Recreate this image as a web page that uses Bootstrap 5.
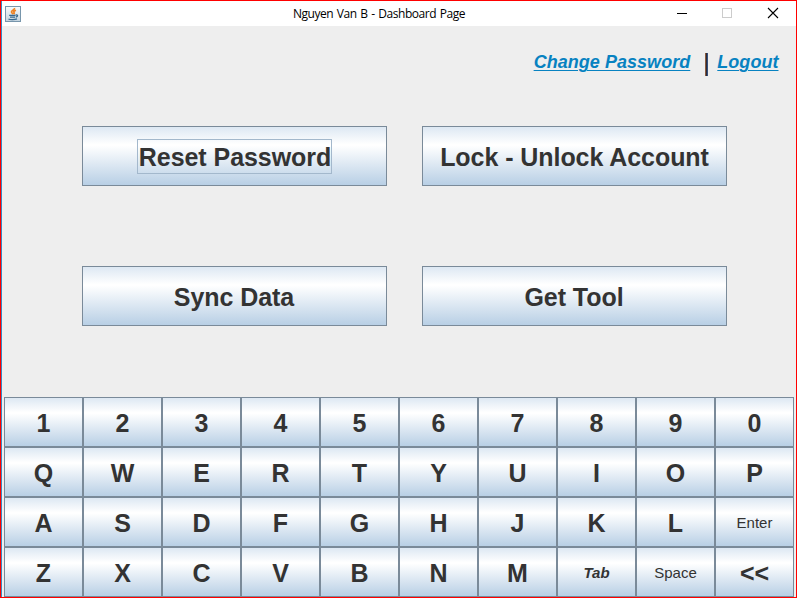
<!DOCTYPE html>
<html lang="en">
<head>
<meta charset="utf-8">
<meta name="viewport" content="width=device-width, initial-scale=1">
<title>Nguyen Van B - Dashboard Page</title>
<link href="https://cdn.jsdelivr.net/npm/bootstrap@5.3.0/dist/css/bootstrap.min.css" rel="stylesheet">
<style>
body{font-family:"Liberation Sans",Arial,sans-serif;color:#333;background:#eee}
.window{width:797px;height:598px;border:1px solid #f00;background:#eee}
.inner-edge{border-left:1px solid #3b8ac4}
.titlebar{height:25px;background:#fff;font:12px/25px "Open Sans","Noto Sans",sans-serif;color:#000}
.side-left{width:97px}
.side{width:137px}
.app-icon{margin-left:-1px}
.title-text{letter-spacing:-.46px;word-spacing:1px}
.account-links{height:100px;padding:22px 17.500px 0 0;font-size:18px;line-height:28px}
.account-links a{color:#0782c1;font-weight:bold;font-style:italic;text-decoration:underline;text-decoration-thickness:1px;text-underline-offset:2px;letter-spacing:.04px}
.divider-bar{width:3px;height:23px;background:linear-gradient(90deg,#8a5a3c 1px,#2b2b3a 1px 2px,#34507c 2px);margin:5px 9.500px 0 14.500px}
.metal{border:1px solid #7a8a99;border-radius:0;background:linear-gradient(#dde8f3 0,#fff 30%,#fff 32%,#b8cfe5 100%);color:#333;font-weight:bold;font-size:25px;line-height:1;padding:0;display:flex;align-items:center;justify-content:center;white-space:nowrap}
.metal:hover{color:#333}
.actions{display:grid;grid-template-columns:305px 305px;grid-auto-rows:60px;gap:80px 35px;padding-left:80px;height:271px}
.actions .metal span{border:1px solid transparent;height:35px;line-height:34px;padding:0 1px;letter-spacing:-.06px}
.actions .metal .focused{border-color:#a3b8cc;padding:0 0 0 1px}
.actions .metal .nudged{padding-right:2px}
.keys{display:grid;grid-template-columns:repeat(10,79px);grid-auto-rows:50px;padding-left:2px}
.keys .metal{padding:3px 0 0}
.keys .plain{font-weight:normal;font-size:15px;padding:1px 0 0}
.keys .tabkey{font-style:italic;font-size:15px;padding:1px 0 0}
</style>
</head>
<body class="m-0 overflow-hidden">
<div class="window overflow-hidden">
<div class="inner-edge">
  <header class="titlebar d-flex justify-content-between">
    <div class="side-left d-flex align-items-center ps-1">
      <svg width="16" height="16" viewBox="0 0 16 16" class="app-icon d-block">
        <defs><linearGradient id="g" x1="0" y1="0" x2="0" y2="1"><stop offset="0" stop-color="#fafcfd"/><stop offset="1" stop-color="#c3d3de"/></linearGradient></defs>
        <rect x=".5" y=".5" width="15" height="15" fill="url(#g)" stroke="#7896ac"/>
        <path d="M9.500 2C10 4 6.300 4.300 6.500 6 6.600 7 7.900 7.200 8 8.300M11 4.300C9 5 8.300 5.700 9 6.500 9.500 7.100 9.200 7.700 8.800 8" fill="none" stroke="#ee8325" stroke-width="1.700"/>
        <path d="M4.200 9.300H10.500M5 11.200H10M10.800 9C13.300 8.300 13 10.700 10.800 11.200M3.500 13C5 13.900 9.800 13.800 12 12.800" fill="none" stroke="#37698f" stroke-width="1.300"/>
      </svg>
    </div>
    <div class="title-text">Nguyen Van B - Dashboard Page</div>
    <div class="side">
      <svg width="137" height="25" viewBox="659 1 137 25" class="d-block" fill="none" shape-rendering="crispEdges">
        <path d="M677 13.500H687" stroke="#000"/>
        <rect x="722.500" y="8.500" width="9" height="9" stroke="#ccc"/>
        <path d="M768 8L778 18M778 8L768 18" stroke="#000" stroke-width="1.100" shape-rendering="auto"/>
      </svg>
    </div>
  </header>
  <nav class="account-links d-flex justify-content-end align-items-start">
    <a href="#">Change Password</a><span class="divider-bar"></span><a href="#">Logout</a>
  </nav>
  <main class="actions">
    <button class="btn metal"><span class="focused">Reset Password</span></button>
    <button class="btn metal"><span>Lock - Unlock Account</span></button>
    <button class="btn metal"><span class="nudged">Sync Data</span></button>
    <button class="btn metal"><span class="nudged">Get Tool</span></button>
  </main>
  <section class="keys">
    <button class="btn metal">1</button><button class="btn metal">2</button><button class="btn metal">3</button><button class="btn metal">4</button><button class="btn metal">5</button><button class="btn metal">6</button><button class="btn metal">7</button><button class="btn metal">8</button><button class="btn metal">9</button><button class="btn metal">0</button>
    <button class="btn metal">Q</button><button class="btn metal">W</button><button class="btn metal">E</button><button class="btn metal">R</button><button class="btn metal">T</button><button class="btn metal">Y</button><button class="btn metal">U</button><button class="btn metal">I</button><button class="btn metal">O</button><button class="btn metal">P</button>
    <button class="btn metal">A</button><button class="btn metal">S</button><button class="btn metal">D</button><button class="btn metal">F</button><button class="btn metal">G</button><button class="btn metal">H</button><button class="btn metal">J</button><button class="btn metal">K</button><button class="btn metal">L</button><button class="btn metal plain">Enter</button>
    <button class="btn metal">Z</button><button class="btn metal">X</button><button class="btn metal">C</button><button class="btn metal">V</button><button class="btn metal">B</button><button class="btn metal">N</button><button class="btn metal">M</button><button class="btn metal tabkey">Tab</button><button class="btn metal plain">Space</button><button class="btn metal">&lt;&lt;</button>
  </section>
</div>
</div>
<script src="https://cdn.jsdelivr.net/npm/bootstrap@5.3.0/dist/js/bootstrap.bundle.min.js"></script>
</body>
</html>
